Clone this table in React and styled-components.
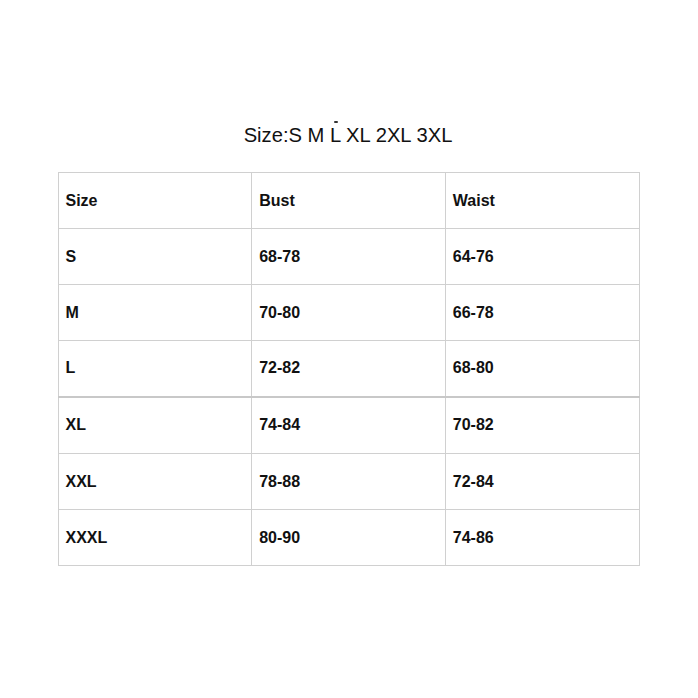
import React from 'react';
import styled, { createGlobalStyle } from 'styled-components';

const GlobalStyle = createGlobalStyle`
  html, body {
    margin: 0;
    padding: 0;
    background: #fff;
    font-family: "Liberation Sans", Arial, sans-serif;
  }
`;

const rows = [
  ['S', '68-78', '64-76'],
  ['M', '70-80', '66-78'],
  ['L', '72-82', '68-80'],
  ['XL', '74-84', '70-82'],
  ['XXL', '78-88', '72-84'],
  ['XXXL', '80-90', '74-86'],
];

function App() {
  return (
    <Page>
      <GlobalStyle />
      <Title>
        Size:S M <Mark>L</Mark> XL 2XL 3XL
      </Title>
      <Table>
        <tbody>
          <Row>
            <Cell>Size</Cell>
            <Cell>Bust</Cell>
            <Cell>Waist</Cell>
          </Row>
          {rows.map((r, i) => (
            <Row key={r[0]} $thick={i === 3}>
              {r.map((c) => (
                <Cell key={c}>{c}</Cell>
              ))}
            </Row>
          ))}
        </tbody>
      </Table>
    </Page>
  );
}

export default App;

const Page = styled.div`
  width: 698px;
  height: 698px;
  display: flex;
  flex-direction: column;
  align-items: center;
  padding-top: 123px;
  box-sizing: border-box;
`;

const Title = styled.div`
  font-size: 20.2px;
  color: #111;
  line-height: 24px;
  margin-bottom: 25px;
  margin-left: -2px;
`;

const Mark = styled.span`
  position: relative;

  &::before {
    content: '';
    position: absolute;
    left: 4px;
    top: -3px;
    width: 4px;
    height: 2px;
    background: #333;
    border-radius: 1px;
  }
`;

const Table = styled.table`
  border-collapse: collapse;
  width: 582px;
  margin-left: -1px;
  table-layout: fixed;
`;

const Row = styled.tr`
  height: ${(p) => (p.$thick ? '57px' : '56px')};
  border-top: ${(p) => (p.$thick ? '2px solid #c8c8c8' : 'none')};
`;

const Cell = styled.td`
  border: 1px solid #d0d0d0;
  padding: 0 7px;
  font-size: 16px;
  font-weight: bold;
  color: #111;
  vertical-align: middle;
`;
